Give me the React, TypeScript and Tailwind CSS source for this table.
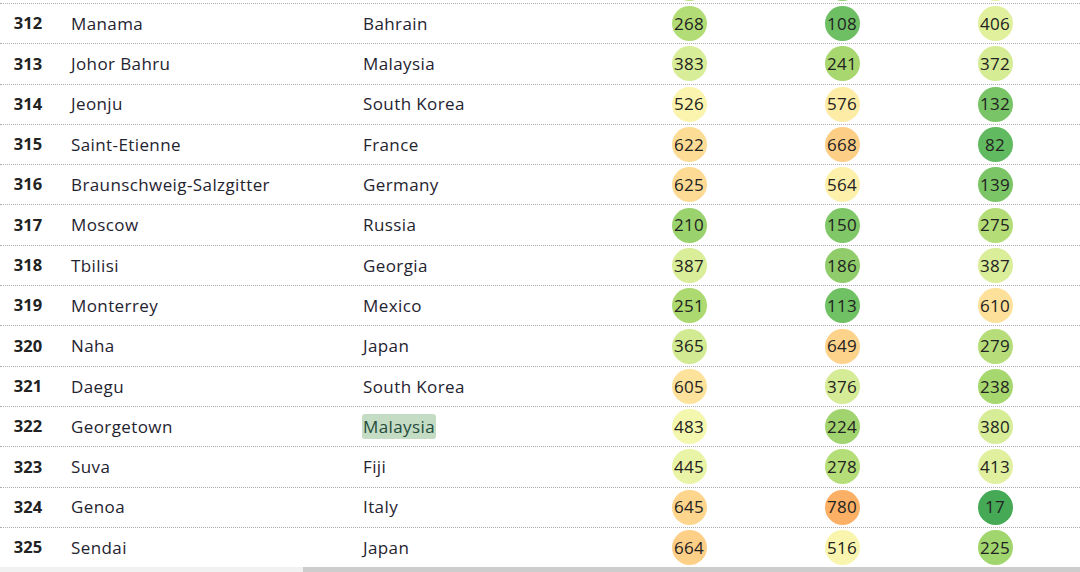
import React from 'react';

type Row = {
  rank: number;
  city: string;
  country: string;
  values: [number, number, number];
  highlight?: boolean;
  partial?: boolean;
};

const rows: Row[] = [
  { rank: 311, city: '', country: '', values: [300, 190, 440], partial: true },
  { rank: 312, city: 'Manama', country: 'Bahrain', values: [268, 108, 406] },
  { rank: 313, city: 'Johor Bahru', country: 'Malaysia', values: [383, 241, 372] },
  { rank: 314, city: 'Jeonju', country: 'South Korea', values: [526, 576, 132] },
  { rank: 315, city: 'Saint-Etienne', country: 'France', values: [622, 668, 82] },
  { rank: 316, city: 'Braunschweig-Salzgitter', country: 'Germany', values: [625, 564, 139] },
  { rank: 317, city: 'Moscow', country: 'Russia', values: [210, 150, 275] },
  { rank: 318, city: 'Tbilisi', country: 'Georgia', values: [387, 186, 387] },
  { rank: 319, city: 'Monterrey', country: 'Mexico', values: [251, 113, 610] },
  { rank: 320, city: 'Naha', country: 'Japan', values: [365, 649, 279] },
  { rank: 321, city: 'Daegu', country: 'South Korea', values: [605, 376, 238] },
  { rank: 322, city: 'Georgetown', country: 'Malaysia', values: [483, 224, 380], highlight: true },
  { rank: 323, city: 'Suva', country: 'Fiji', values: [445, 278, 413] },
  { rank: 324, city: 'Genoa', country: 'Italy', values: [645, 780, 17] },
  { rank: 325, city: 'Sendai', country: 'Japan', values: [664, 516, 225] },
];

// value -> colour scale, green (low) to orange (high)
const stops: [number, [number, number, number]][] = [
  [0, [61, 165, 83]],
  [100, [106, 190, 99]],
  [250, [172, 217, 112]],
  [400, [222, 239, 156]],
  [490, [246, 248, 176]],
  [560, [253, 241, 172]],
  [640, [253, 214, 142]],
  [700, [252, 197, 124]],
  [800, [251, 171, 96]],
];

function scaleColor(v: number) {
  for (let i = 0; i < stops.length - 1; i++) {
    const [a, ca] = stops[i];
    const [b, cb] = stops[i + 1];
    if (v <= b) {
      const t = Math.max(0, (v - a) / (b - a));
      const c = ca.map((x, k) => Math.round(x + (cb[k] - x) * t));
      return `rgb(${c[0]}, ${c[1]}, ${c[2]})`;
    }
  }
  const c = stops[stops.length - 1][1];
  return `rgb(${c[0]}, ${c[1]}, ${c[2]})`;
}

function Bubble({ value, hideLabel }: { value: number; hideLabel?: boolean }) {
  return (
    <div className="flex justify-center">
      <div
        className="flex h-[35px] w-[35px] items-center justify-center rounded-full text-[17px] tracking-[0.2px] text-[#222]"
        style={{ backgroundColor: scaleColor(value) }}
      >
        {hideLabel ? null : value}
      </div>
    </div>
  );
}

export default function App() {
  return (
    <div
      className="h-[572px] w-[1080px] overflow-hidden bg-white text-[#1f2330]"
      style={{ fontFamily: '"Open Sans", "Liberation Sans", sans-serif' }}
    >
      <div className="flex h-[567px] flex-col overflow-hidden">
        <div className="-mt-[37.3px]">
          {rows.map((row) => (
            <div
              key={row.rank}
              className="grid h-[40.3px] grid-cols-[56px_292px_264.5px_153px_153px_153px_1fr] items-center border-t border-dotted border-[#acacac] text-[17px] tracking-[0.4px]"
            >
              <div className="text-center text-[16.5px] font-bold tracking-normal text-[#222]">
                {row.partial ? '' : row.rank}
              </div>
              <div className="pl-[15px]">{row.city}</div>
              <div className="pl-[15px]">
                {row.highlight ? (
                  <span className="-ml-[1px] rounded-[3px] bg-[#c5dcc4] px-[1px] py-[1px] text-[#1f4b3c]">
                    {row.country}
                  </span>
                ) : (
                  row.country
                )}
              </div>
              {row.values.map((v, i) => (
                <Bubble key={i} value={v} hideLabel={row.partial} />
              ))}
              <div />
            </div>
          ))}
        </div>
      </div>
      <div className="flex h-[5px]">
        <div className="w-[303px] bg-[#f1f1f1]" />
        <div className="flex-1 bg-[#cdcdcd]" />
      </div>
    </div>
  );
}
